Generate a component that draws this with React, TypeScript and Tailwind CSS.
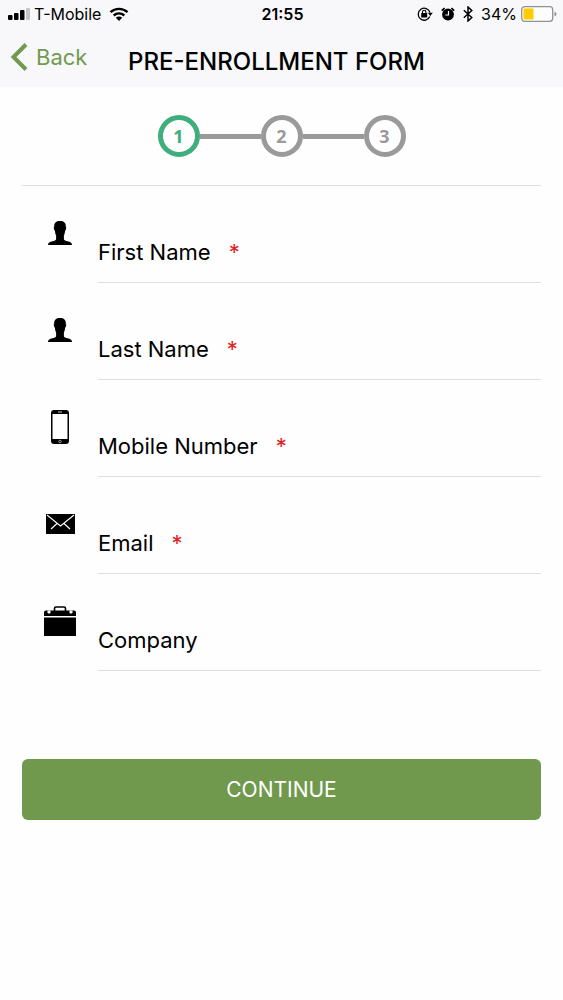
import { Fragment, useState, type ReactNode } from 'react'

const steps = [1, 2, 3]

function PersonIcon() {
  return (
    <svg width="24" height="24" viewBox="0 0 24 24" aria-hidden="true">
      <path d="M12 0C8 0 6 2 6.200 5.800c-.5.200-.5 1-.3 1.900.2 1 .5 1.700 1 2 .2 2.200.6 3.600 1.200 4.800v3.700c-.3 1.100-1.700 1.500-3.600 2C1.700 21 0 21.700 0 24h24c0-2.300-1.700-3-4.500-3.800-1.900-.5-3.300-.9-3.600-2v-3.700c.6-1.200 1-2.600 1.200-4.800.5-.3.8-1 1-2 .2-.9.200-1.700-.3-1.900C18 2 16 0 12 0Z" />
    </svg>
  )
}

function PhoneIcon() {
  return (
    <svg width="18" height="34" viewBox="0 0 18 34" aria-hidden="true">
      <rect width="18" height="34" rx="3" />
      <rect x="1.500" y="4" width="15" height="25" fill="#fefefe" />
      <path d="M7 2h4" stroke="#ccc" strokeWidth="1" />
      <circle cx="9" cy="31.500" r="1.300" fill="none" stroke="#ccc" strokeWidth=".7" />
    </svg>
  )
}

function MailIcon() {
  return (
    <svg width="29" height="20" viewBox="0 0 29 20" aria-hidden="true">
      <rect width="29" height="20" />
      <path d="M1 1 14.500 12 28 1M5 15l6-5.500M24 15l-6-5.500" fill="none" stroke="#fff" strokeWidth="1.100" />
    </svg>
  )
}

function BriefcaseIcon() {
  return (
    <svg width="32" height="30" viewBox="0 0 32 30" aria-hidden="true">
      <path d="M10.500 5V2.500q0-1.500 1.500-1.500h8q1.500 0 1.500 1.500V5" fill="none" stroke="#000" strokeWidth="1.600" />
      <path d="M2 4.500h28q2 0 2 2V10H0V6.500q0-2 2-2ZM0 11.500h32V30H0Z" />
      <path d="M3.500 4.500h3V7q-1.500 1.200-3 0ZM25.500 4.500h3V7q-1.500 1.200-3 0Z" fill="#fff" />
    </svg>
  )
}

type Field = { id: string; label: string; type: string; required: boolean; icon: ReactNode }

const fields: Field[] = [
  { id: 'firstName', label: 'First Name', type: 'text', required: true, icon: <PersonIcon /> },
  { id: 'lastName', label: 'Last Name', type: 'text', required: true, icon: <PersonIcon /> },
  { id: 'mobile', label: 'Mobile Number', type: 'tel', required: true, icon: <PhoneIcon /> },
  { id: 'email', label: 'Email', type: 'email', required: true, icon: <MailIcon /> },
  { id: 'company', label: 'Company', type: 'text', required: false, icon: <BriefcaseIcon /> },
]

function StatusBar() {
  return (
    <div className="grid h-7 grid-cols-[1fr_auto_1fr] items-center pr-1.5 pl-2 text-base leading-7">
      <div className="flex items-center">
        <svg width="22" height="12" viewBox="0 0 22 12" aria-hidden="true">
          <rect y="7" width="4.500" height="5" rx="1" />
          <rect x="6" y="5" width="4.500" height="7" rx="1" />
          <rect x="12" y="2" width="4.500" height="10" rx="1" />
          <rect x="18" width="4" height="12" rx="1" fill="#c4c3c6" />
        </svg>
        <span className="ml-1">T-Mobile</span>
        <svg className="ml-2" width="20" height="14" viewBox="0 0 20 14" aria-hidden="true">
          <path d="M1.500 5.200a12.500 12.500 0 0 1 17 0M4.700 8.500a7.800 7.800 0 0 1 10.600 0" fill="none" stroke="#000" strokeWidth="2.400" />
          <path d="M10 14 6.800 10.800a4.600 4.600 0 0 1 6.400 0Z" />
        </svg>
      </div>
      <span className="font-semibold">21:55</span>
      <div className="flex items-center justify-end">
        <svg width="16" height="14" viewBox="0 0 16 14" aria-hidden="true">
          <path d="M12.800 9.500A6 6 0 1 1 13 5.500" fill="none" stroke="#000" strokeWidth="1.300" />
          <path d="M10.800 5.800h5L13.300 9Z" />
          <rect x="4.200" y="6" width="6" height="4.500" rx=".5" />
          <path d="M5.500 6V5a1.700 1.700 0 0 1 3.400 0v1" fill="none" stroke="#000" strokeWidth="1.100" />
        </svg>
        <svg className="ml-2" width="14" height="14" viewBox="0 0 14 14" aria-hidden="true">
          <circle cx="7" cy="7.500" r="5.900" />
          <path d="M.8 3.600 3.600 1M13.200 3.600 10.400 1" stroke="#000" strokeWidth="1.700" />
          <path d="M7.500 4v4H4.300" fill="none" stroke="#fff" strokeWidth="1.200" />
        </svg>
        <svg className="ml-2" width="10" height="16" viewBox="0 0 10 16" aria-hidden="true">
          <path d="m.8 4.200 8 7.300L5 15V1l3.800 3.500-8 7.300" fill="none" stroke="#000" strokeWidth="1.500" />
        </svg>
        <span className="ml-2">34%</span>
        <svg className="ml-1" width="36" height="16" viewBox="0 0 36 16" aria-hidden="true">
          <rect x=".7" y=".7" width="31" height="14.600" rx="3" fill="#fdfdfd" stroke="#919092" strokeWidth="1.300" />
          <rect x="2.500" y="2.500" width="10" height="11" rx="1" fill="#fc0" />
          <path d="M33.500 5.500q2 1 2 2.500t-2 2.500Z" fill="#919092" />
        </svg>
      </div>
    </div>
  )
}

function Header() {
  return (
    <header className="bg-[#f8f7fa]">
      <StatusBar />
      <div className="grid h-[59px] grid-cols-[1fr_auto_1fr] items-center pr-5 pl-2.5">
        <button type="button" className="mb-0.5 flex items-center gap-2 justify-self-start text-[22px] leading-8 text-[#719a4f]">
          <svg width="18" height="28" viewBox="0 0 18 28" aria-hidden="true">
            <path d="M16 1.500 3.500 14 16 26.500" fill="none" stroke="currentColor" strokeWidth="4" />
          </svg>
          Back
        </button>
        <h1 className="pt-2 text-2xl font-medium">PRE-ENROLLMENT FORM</h1>
      </div>
    </header>
  )
}

function Stepper({ current }: { current: number }) {
  return (
    <ol className="flex items-center justify-center border-b border-[#dfdfe0] py-7">
      {steps.map((step) => (
        <Fragment key={step}>
          {step > 1 && <li aria-hidden="true" className="h-[5px] w-[61px] bg-[#9a999b]" />}
          <li
            aria-current={step === current ? 'step' : undefined}
            className={`flex size-[42px] items-center justify-center rounded-full border-[5px] font-['Open_Sans',sans-serif] text-lg font-bold ${
              step === current ? 'border-[#3fae7c] text-[#3fae7c]' : 'border-[#9a999b] text-[#9a999b]'
            }`}
          >
            {step}
          </li>
        </Fragment>
      ))}
    </ol>
  )
}

export default function App() {
  const [values, setValues] = useState<Record<string, string>>({})

  return (
    <div className="min-h-screen bg-[#fefefe] font-['Inter','Liberation_Sans',sans-serif] text-black">
      <Header />
      <main className="px-[22px]">
        <Stepper current={1} />
        <form onSubmit={(e) => e.preventDefault()}>
          {fields.map(({ id, label, type, required, icon }) => (
            <div key={id} className="flex h-[97px]">
              <div className="flex w-[76px] shrink-0 items-center justify-center pb-1">{icon}</div>
              <div className="flex min-w-0 grow items-end border-b border-[#dfdfe0] pb-3.5 text-[22px] leading-8">
                <label htmlFor={id} className="whitespace-nowrap">
                  {label}
                  {required && <span className="ml-[18px] text-[#e02020]">*</span>}
                </label>
                <input
                  id={id}
                  name={id}
                  type={type}
                  required={required}
                  value={values[id] ?? ''}
                  onChange={(e) => setValues({ ...values, [id]: e.target.value })}
                  className="ml-3 min-w-0 grow bg-transparent outline-none"
                />
              </div>
            </div>
          ))}
          <button
            type="submit"
            className="mt-[88px] h-[61px] w-full rounded-md bg-[#70994e] text-[21px] text-white"
          >
            CONTINUE
          </button>
        </form>
      </main>
    </div>
  )
}
